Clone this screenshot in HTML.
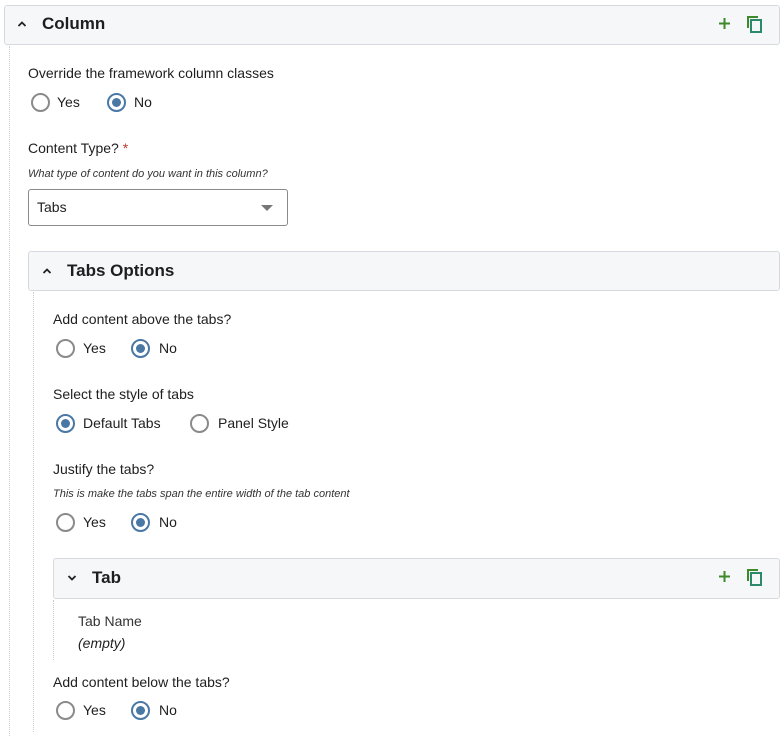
<!DOCTYPE html>
<html><head><meta charset="utf-8"><style>
*{margin:0;padding:0;box-sizing:border-box}
body{width:783px;height:732px;background:#fff;position:relative;overflow:hidden;font-family:"Liberation Sans",sans-serif;color:#1e1e1e;font-size:14px}
.a{position:absolute;white-space:nowrap}
.hdr{position:absolute;background:#f6f7f9;border:1px solid #d6d9de;border-radius:3px}
.ht{position:absolute;font-weight:bold;font-size:17px;color:#1e1e1e}
.dl{position:absolute;border-left:1px dotted #c9ccd1;width:0}
.r{position:absolute;width:19px;height:19px;border:2px solid #8a8a8a;border-radius:50%;background:#fff}
.r.on{border-color:#4a78a5}
.r.on::after{content:"";position:absolute;left:3px;top:3px;width:9px;height:9px;border-radius:50%;background:#4a78a5}
.it{font-style:italic;font-size:11px;color:#333}
</style></head><body>

<div class="hdr" style="left:4px;top:5px;width:776px;height:40px"></div>
<svg class="a" style="left:17px;top:20px" width="10" height="8" viewBox="0 0 10 8"><path d="M1.5 6L5 2.5 8.5 6" fill="none" stroke="#222" stroke-width="1.8"/></svg>
<div class="ht" style="left:42px;top:14px">Column</div>
<svg class="a" style="left:718px;top:17px" width="13" height="13" viewBox="0 0 13 13"><path d="M6.5 1v11M1 6.5h11" stroke="#3d8a2a" stroke-width="2"/></svg>
<svg class="a" style="left:746px;top:15px" width="17" height="18" viewBox="0 0 17 18"><path d="M2 13V2h10" fill="none" stroke="#3d8a2a" stroke-width="2"/><rect x="5" y="5" width="10" height="12" fill="none" stroke="#2a8a6a" stroke-width="2"/></svg>

<div class="dl" style="left:9px;top:46px;height:690px"></div>

<div class="a" style="left:28px;top:65px">Override the framework column classes</div>
<div class="r" style="left:31px;top:93px"></div><div class="a" style="left:57px;top:94px">Yes</div>
<div class="r on" style="left:107px;top:93px"></div><div class="a" style="left:134px;top:94px">No</div>

<div class="a" style="left:28px;top:140px">Content Type? <span style="color:#c0392b">*</span></div>
<div class="a it" style="left:28px;top:168px">What type of content do you want in this column?</div>
<div class="a" style="left:28px;top:189px;width:260px;height:37px;border:1px solid #8a8a8a;border-radius:3px"></div>
<div class="a" style="left:37px;top:199px">Tabs</div>
<div class="a" style="left:261px;top:205px;width:0;height:0;border-left:6px solid transparent;border-right:6px solid transparent;border-top:6px solid #777"></div>

<div class="hdr" style="left:28px;top:251px;width:752px;height:40px"></div>
<svg class="a" style="left:42px;top:267px" width="10" height="8" viewBox="0 0 10 8"><path d="M1.5 6L5 2.5 8.5 6" fill="none" stroke="#222" stroke-width="1.8"/></svg>
<div class="ht" style="left:67px;top:261px">Tabs Options</div>
<div class="dl" style="left:33px;top:292px;height:440px"></div>

<div class="a" style="left:53px;top:311px">Add content above the tabs?</div>
<div class="r" style="left:56px;top:339px"></div><div class="a" style="left:83px;top:340px">Yes</div>
<div class="r on" style="left:131px;top:339px"></div><div class="a" style="left:159px;top:340px">No</div>

<div class="a" style="left:53px;top:386px">Select the style of tabs</div>
<div class="r on" style="left:56px;top:414px"></div><div class="a" style="left:83px;top:415px">Default Tabs</div>
<div class="r" style="left:190px;top:414px"></div><div class="a" style="left:218px;top:415px">Panel Style</div>

<div class="a" style="left:53px;top:461px">Justify the tabs?</div>
<div class="a it" style="left:53px;top:488px">This is make the tabs span the entire width of the tab content</div>
<div class="r" style="left:56px;top:513px"></div><div class="a" style="left:83px;top:514px">Yes</div>
<div class="r on" style="left:131px;top:513px"></div><div class="a" style="left:159px;top:514px">No</div>

<div class="hdr" style="left:53px;top:558px;width:727px;height:41px"></div>
<svg class="a" style="left:67px;top:574px" width="10" height="8" viewBox="0 0 10 8"><path d="M1.5 2L5 5.5 8.5 2" fill="none" stroke="#222" stroke-width="1.8"/></svg>
<div class="ht" style="left:92px;top:568px">Tab</div>
<svg class="a" style="left:718px;top:570px" width="13" height="13" viewBox="0 0 13 13"><path d="M6.5 1v11M1 6.5h11" stroke="#3d8a2a" stroke-width="2"/></svg>
<svg class="a" style="left:746px;top:568px" width="17" height="18" viewBox="0 0 17 18"><path d="M2 13V2h10" fill="none" stroke="#3d8a2a" stroke-width="2"/><rect x="5" y="5" width="10" height="12" fill="none" stroke="#2a8a6a" stroke-width="2"/></svg>
<div class="dl" style="left:53px;top:600px;height:60px"></div>
<div class="a" style="left:78px;top:613px;color:#333">Tab Name</div>
<div class="a" style="left:78px;top:635px;font-style:italic">(empty)</div>

<div class="a" style="left:53px;top:674px">Add content below the tabs?</div>
<div class="r" style="left:56px;top:701px"></div><div class="a" style="left:83px;top:702px">Yes</div>
<div class="r on" style="left:131px;top:701px"></div><div class="a" style="left:159px;top:702px">No</div>
</body></html>
